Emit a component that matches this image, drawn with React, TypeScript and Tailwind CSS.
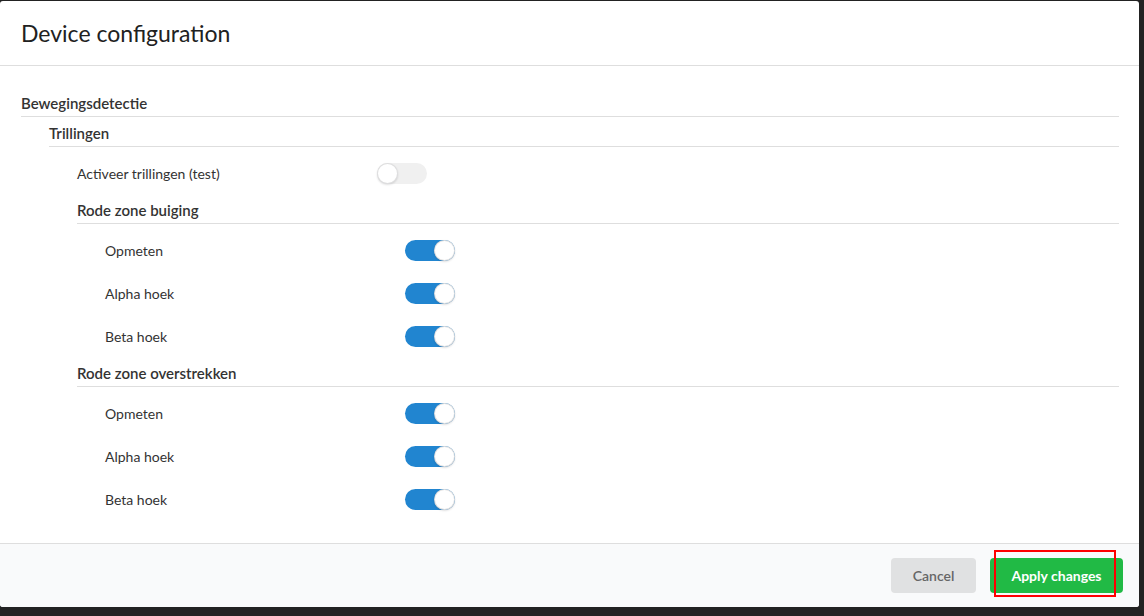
import { useState } from 'react';

type ToggleProps = { on: boolean; onChange: () => void };

function Toggle({ on, onChange }: ToggleProps) {
  return (
    <button
      type="button"
      onClick={onChange}
      className={
        'relative h-[21px] w-[50px] shrink-0 rounded-full transition-colors ' +
        (on ? 'bg-[#2185d0]' : 'bg-[#f0f0f0]')
      }
    >
      <span
        className={
          'absolute top-0 h-[21px] w-[21px] rounded-full bg-white shadow-[0_1px_2px_0_rgba(34,36,38,0.15),inset_0_0_0_1px_rgba(34,36,38,0.15)] transition-all ' +
          (on ? 'left-[29px]' : 'left-0')
        }
      />
    </button>
  );
}

function Heading({ children, className = '' }: { children: React.ReactNode; className?: string }) {
  return (
    <div
      className={
        'flex h-[26px] items-center border-b border-[#dedede] text-[15px] font-semibold text-[#333] ' +
        className
      }
    >
      {children}
    </div>
  );
}

function Row({ label, on, onChange }: { label: string; on: boolean; onChange: () => void }) {
  return (
    <div className="flex h-[43px] items-center text-[14px] text-[#333]">
      <span className="w-[300px] shrink-0">{label}</span>
      <Toggle on={on} onChange={onChange} />
    </div>
  );
}

export default function App() {
  const [vals, setVals] = useState<Record<string, boolean>>({
    test: false,
    bOpmeten: true,
    bAlpha: true,
    bBeta: true,
    oOpmeten: true,
    oAlpha: true,
    oBeta: true,
  });
  const flip = (k: string) => setVals((v) => ({ ...v, [k]: !v[k] }));

  return (
    <div
      className="h-[616px] w-[1144px] overflow-hidden bg-[#222222] pt-px"
      style={{ fontFamily: 'Lato, "Noto Sans", sans-serif' }}
    >
      <div className="flex h-[606px] w-[1139px] flex-col overflow-hidden rounded-[3px] bg-white">
        {/* Header */}
        <div className="flex h-[65px] shrink-0 items-center border-b border-[#dedede] px-[21px]">
          <h2 className="text-[23px] font-normal text-[#212121]">Device configuration</h2>
        </div>

        {/* Body */}
        <div className="flex-1 pt-[25px] pl-[21px] pr-[20px]">
          <Heading>Bewegingsdetectie</Heading>
          <div className="pl-[28px]">
            <Heading className="mt-[4px]">Trillingen</Heading>
            <div className="mt-[5px] pl-[28px]">
              <Row label="Activeer trillingen (test)" on={vals.test} onChange={() => flip('test')} />
              <Heading className="mt-[3px]">Rode zone buiging</Heading>
              <div className="mt-[5px] pl-[28px]">
                <Row label="Opmeten" on={vals.bOpmeten} onChange={() => flip('bOpmeten')} />
                <Row label="Alpha hoek" on={vals.bAlpha} onChange={() => flip('bAlpha')} />
                <Row label="Beta hoek" on={vals.bBeta} onChange={() => flip('bBeta')} />
              </div>
              <Heading className="mt-[3px]">Rode zone overstrekken</Heading>
              <div className="mt-[5px] pl-[28px]">
                <Row label="Opmeten" on={vals.oOpmeten} onChange={() => flip('oOpmeten')} />
                <Row label="Alpha hoek" on={vals.oAlpha} onChange={() => flip('oAlpha')} />
                <Row label="Beta hoek" on={vals.oBeta} onChange={() => flip('oBeta')} />
              </div>
            </div>
          </div>
        </div>

        {/* Footer */}
        <div className="flex h-[64px] shrink-0 items-start justify-end gap-[14px] border-t border-[#dedede] bg-[#f9fafb] pt-[14px] pr-[16px]">
          <button className="h-[35px] w-[85px] rounded-[4px] bg-[#e0e1e2] text-[14px] font-semibold text-[#666]">
            Cancel
          </button>
          <div className="relative">
            <button className="h-[35px] w-[133px] rounded-[4px] bg-[#21ba45] text-[14px] font-bold text-white">
              Apply changes
            </button>
            {/* annotation box */}
            <div className="pointer-events-none absolute left-[4px] top-[-8px] h-[47px] w-[122px] border-2 border-[#ff0000]" />
          </div>
        </div>
      </div>
    </div>
  );
}
